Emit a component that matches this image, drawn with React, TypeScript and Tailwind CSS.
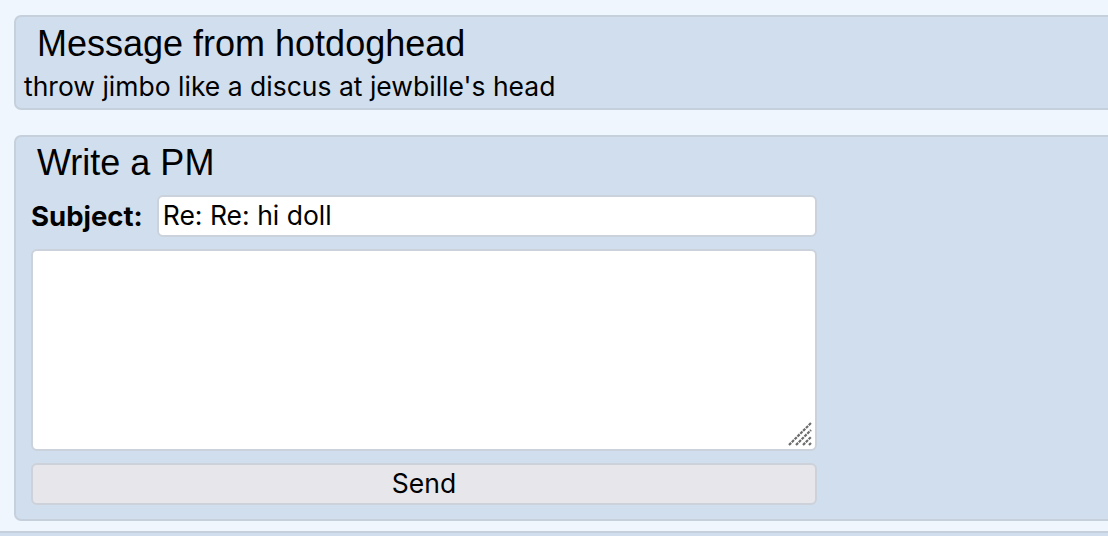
import React from "react";

export default function App() {
  return (
    <div className="w-[1108px] h-[536px] overflow-hidden bg-[#eff6fe] pt-[15px] pl-[14px] text-black" style={{ fontFamily: "Inter, 'Liberation Sans', sans-serif" }}>
      <div className="w-[1120px] border-2 border-[#c6d0dd] bg-[#d1deed] rounded-[7px] h-[95px]">
        <div className="h-[53px] pl-[21px] pt-[7px] text-[36px] leading-[40px] font-['Liberation_Sans',sans-serif]">Message from hotdoghead</div>
        <div className="pl-[8px] text-[26.5px] leading-[32px]">throw jimbo like a discus at jewbille's head</div>
      </div>
      <div className="mt-[25px] w-[1120px] border-2 border-[#c6d0dd] bg-[#d1deed] rounded-[7px] h-[386px]">
        <div className="h-[58px] pl-[21px] pt-[6px] text-[36px] leading-[40px] font-['Liberation_Sans',sans-serif]">Write a PM</div>
        <div className="w-[816px] px-[15px] flex flex-col gap-[12px]">
          <div className="flex items-center gap-[14px]">
            <span className="text-[27.5px] font-bold leading-[32px]">Subject:</span>
            <div className="flex-1 h-[42px] bg-white border-2 border-[#cbd2dc] rounded-[6px] px-[4px] flex items-center text-[26.5px]">Re: Re: hi doll</div>
          </div>
          <div className="relative h-[202px] bg-white border-2 border-[#cbd2dc] rounded-[6px]">
            <svg className="absolute right-[1px] bottom-[1px]" width="28" height="28" viewBox="0 0 28 28">
              <path d="M3 25 L25 3 M10 25 L25 10 M17 25 L25 17 M23 25 L25 23" stroke="#6b6b6b" strokeWidth="2.2" strokeDasharray="3 1" />
            </svg>
          </div>
          <div className="h-[42px] bg-[#e7e6eb] border-2 border-[#cdd2da] rounded-[6px] flex items-center justify-center text-[26.5px]">Send</div>
        </div>
      </div>
      <div className="mt-[10px] w-[1200px] h-[40px] border-t-2 border-[#c6d0dd] bg-[#d1deed] -ml-[14px]"></div>
    </div>
  );
}
